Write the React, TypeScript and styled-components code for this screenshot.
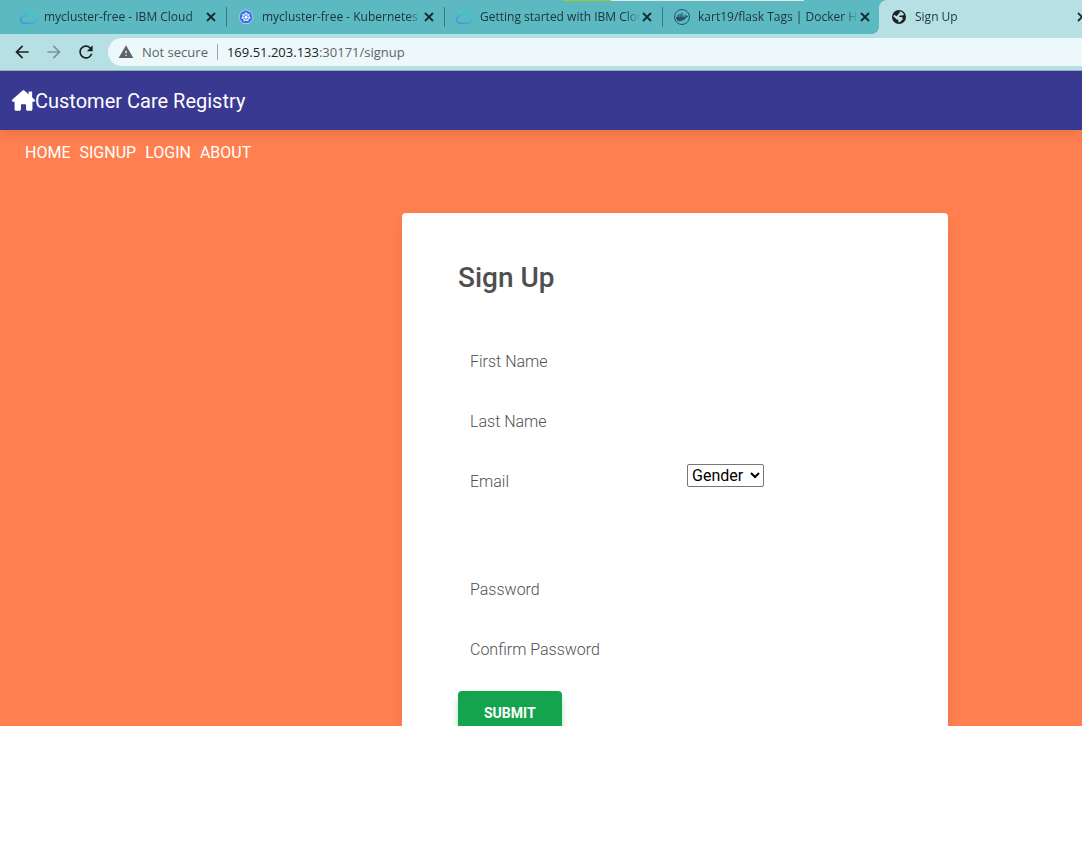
import React, { useState } from "react";
import styled, { createGlobalStyle, css } from "styled-components";
import { MdArrowBack, MdArrowForward, MdRefresh, MdWarning } from "react-icons/md";
import { FaDocker } from "react-icons/fa6";

const GlobalStyle = createGlobalStyle`
  *, *::before, *::after { box-sizing: border-box; }
  body {
    margin: 0;
    background: #fff;
    font-family: Roboto, "Liberation Sans", sans-serif;
    font-size: 16px;
    line-height: 24px;
  }
  button, input, select { font: inherit; }
`;

const chromeFont = `"Open Sans", "Noto Sans", sans-serif`;

const Frame = styled.div`
  display: flex;
  flex-direction: column;
  height: calc(100vh - 142px);
  min-height: 320px;
  overflow: hidden;
`;

/* Browser chrome */

const TabStrip = styled.div`
  position: relative;
  display: flex;
  flex: none;
  height: 34px;
  padding-left: 8px;
  overflow: hidden;
  background: #5cb8c1;
  font-family: ${chromeFont};
  font-size: 12px;
  line-height: 16px;
  color: #1d3336;
`;

const LoadBar = styled.div`
  position: absolute;
  top: 0;
  left: 52%;
  display: flex;
  width: 241px;
  height: 1px;
  background: #dfe6df;

  &::before {
    content: "";
    width: 20%;
    background: #a2c62b;
  }
`;

const Tab = styled.div<{ $active?: boolean; $divider?: boolean }>`
  position: relative;
  display: flex;
  flex: none;
  align-items: center;
  width: 218px;
  padding: 0 8px 0 12px;

  ${(p) =>
    p.$divider &&
    css`
      &::after {
        content: "";
        position: absolute;
        right: -1px;
        top: 7px;
        width: 1px;
        height: 20px;
        background: #3b777d;
      }
    `}

  ${(p) =>
    p.$active &&
    css`
      margin-left: -1px;
      background: #b7e0e4;
      border-radius: 8px 8px 0 0;

      &::before {
        content: "";
        position: absolute;
        left: -8px;
        bottom: 0;
        width: 8px;
        height: 8px;
        background: radial-gradient(circle at 0 0, transparent 8px, #b7e0e4 8px);
      }
    `}
`;

const TabIcon = styled.span`
  display: flex;
  flex: none;
  width: 16px;
  height: 16px;
  color: #202124;
`;

const TabTitle = styled.span`
  flex: 1;
  min-width: 0;
  margin-left: 8px;
  overflow: hidden;
  white-space: nowrap;
  mask-image: linear-gradient(to left, transparent 0, #000 14px);
`;

const CloseButton = styled.button`
  display: flex;
  flex: none;
  padding: 1px;
  border: 0;
  background: none;
  color: #182b2d;
`;

const Toolbar = styled.div`
  display: flex;
  flex: none;
  align-items: center;
  gap: 12px;
  height: 37px;
  padding-left: 12px;
  background: #b7e0e4;
  border-bottom: 1px solid #8fb0b6;
`;

const ToolButton = styled.button`
  display: flex;
  padding: 0;
  border: 0;
  background: none;
  color: #202124;

  &:disabled {
    color: #7b9699;
  }
`;

const AddressBar = styled.div`
  display: flex;
  flex: 1;
  align-items: center;
  height: 28px;
  padding-left: 10px;
  border-radius: 14px 0 0 14px;
  background: #ecf8f9;
  font-family: ${chromeFont};
  font-size: 13px;
  line-height: 20px;
  color: #5f6368;
  white-space: nowrap;
`;

const Security = styled.span`
  display: flex;
  align-items: center;
  gap: 8px;
  padding-right: 9px;
`;

const Divider = styled.span`
  width: 1px;
  height: 16px;
  margin-right: 9px;
  background: #9aa5a7;
`;

const Host = styled.span`
  color: #202124;
`;

/* Page */

const Page = styled.div`
  flex: 1;
  min-height: 0;
  overflow: hidden;
  background: #ff7f50;
`;

const Header = styled.header`
  position: relative;
  display: flex;
  align-items: center;
  height: 59px;
  padding: 0 12px;
  background: #393991;
  box-shadow: 0 4px 12px rgba(0, 0, 0, 0.1);
  color: #fff;
  font-size: 20px;
`;

const Brand = styled.a`
  display: flex;
  align-items: center;
  color: inherit;
  text-decoration: none;
`;

const Nav = styled.nav`
  display: flex;
  gap: 9px;
  padding: 11px 25px 0;
`;

const NavLink = styled.a`
  color: #fff;
  text-decoration: none;
`;

const Main = styled.main`
  display: grid;
  grid-template-columns: 3fr minmax(0, 546px) 1fr;
  padding-top: 48px;
`;

const Card = styled.form`
  grid-column: 2;
  padding: 48px 56px;
  border-radius: 4px;
  background: #fff;
  box-shadow: 0 2px 15px -3px rgba(0, 0, 0, 0.07), 0 10px 20px -2px rgba(0, 0, 0, 0.04);
`;

const Title = styled.h1`
  margin: 0 0 48px;
  font-size: 28px;
  font-weight: 500;
  line-height: 34px;
  color: #4f4f4f;
`;

const Row = styled.div<{ $gap?: number }>`
  display: grid;
  grid-template-columns: 1fr 1fr;
  column-gap: 24px;
  align-items: start;
  margin-bottom: ${(p) => p.$gap ?? 24}px;
`;

const FieldBox = styled.div`
  display: grid;
  height: 36px;
  align-items: center;

  > * {
    grid-area: 1 / 1;
  }
`;

const Label = styled.label<{ $hidden: boolean }>`
  padding: 2px 0 0 12px;
  font-weight: 300;
  color: #4f4f4f;
  pointer-events: none;
  visibility: ${(p) => (p.$hidden ? "hidden" : "visible")};
`;

const Input = styled.input`
  width: 100%;
  height: 36px;
  padding: 0 12px;
  border: 0;
  background: transparent;
  color: #4f4f4f;
  outline: none;
`;

const Select = styled.select`
  justify-self: start;
  width: 77px;
  height: 23px;
  margin-top: 1px;
  padding: 0;
  border: 1px solid #767676;
  border-radius: 2px;
  background: #fff;
  color: #000;
`;

const Submit = styled.button`
  padding: 10px 26px;
  border: 0;
  border-radius: 4px;
  background: #14a44d;
  box-shadow: 0 4px 9px -4px #14a44d;
  color: #fff;
  font-size: 14px;
  font-weight: 700;
  line-height: 24px;
`;

const CloseIcon = () => (
  <svg width="12" height="12" viewBox="0 0 12 12" fill="none">
    <path d="M2 2l8 8M10 2l-8 8" stroke="currentColor" strokeWidth="1.8" />
  </svg>
);

const HouseIcon = () => (
  <svg width="23" height="21" viewBox="0 0 576 512" fill="currentColor">
    <path d="M416 32h72a16 16 0 0 1 16 16v150l-88-80z" />
    <path d="M576 256c0 18-15 32-32 32h-32v184c0 22-18 40-40 40h-80c-22 0-40-18-40-40v-104c0-9-7-16-16-16h-96c-9 0-16 7-16 16v104c0 22-18 40-40 40h-80c-22 0-40-18-40-40V288H32c-18 0-32-14-32-32 0-9 3-17 10-24L266 8c7-6 15-8 22-8s15 2 21 7l256 225c8 7 11 15 11 24z" />
  </svg>
);

const GlobeIcon = () => (
  <svg width="16" height="16" viewBox="0 0 16 16">
    <circle cx="8" cy="8" r="7" fill="#202124" />
    <path
      d="M8.600 2.600c2 .1 3.500 1.200 4.400 2.800-.6.900-1.500 1.200-2.700 1H8.800c-.8.500-.8 1.200-.1 1.600l1.800.1c1 .4 1.300 1.200 1.100 2.200-.2 1-1.200 1.300-1.900 2-.4.700-1 1.200-2 1.100l-.4-2c-.2-.8-.9-1-1.800-1L4.300 9.100 2.500 7.700c0-.8.2-1.400.5-2l2.600 1.500 1.100-1.300c.2-.9 1.300-.8 1.700-1.400z"
      fill="#b7e0e4"
    />
  </svg>
);

const CloudIcon = () => (
  <svg width="16" height="16" viewBox="0 0 16 16" fill="none">
    <defs>
      <linearGradient id="cloudFill" x1="0" y1="1" x2="1" y2="0">
        <stop offset="0" stopColor="#2f8fe6" />
        <stop offset="1" stopColor="#3fd0d8" />
      </linearGradient>
    </defs>
    <path
      d="M3.800 14.200h8.800a3 3 0 0 0 .5-5.900 4.600 4.600 0 0 0-8.700-1.400A3.700 3.700 0 0 0 .7 10.700a3.300 3.300 0 0 0 3.100 3.500z"
      stroke="url(#cloudFill)"
      strokeWidth="1.3"
    />
    <path
      d="M4.500 4.600 3.800 3.300M7 3.200 6.700 1.800M9.800 3.100 10.200 1.700M12.300 4.400l1-1.100M13.800 6.600l1.300-.5"
      stroke="#3fcbd6"
      strokeWidth="1.200"
    />
  </svg>
);

const KubernetesIcon = () => (
  <svg width="16" height="16" viewBox="0 0 16 16">
    <path
      d="M8 .8 13.600 3.500 15 9.500 11.100 14.500H4.900L1 9.500 2.400 3.500z"
      fill="#326ce5"
      stroke="#c3daf5"
      strokeWidth=".8"
      strokeLinejoin="round"
    />
    <circle cx="8" cy="8" r="3.400" fill="none" stroke="#fff" strokeWidth="1" />
    <path
      d="M8 8V3M8 8 11.900 4.900M8 8l4.900 1.100M8 8l2.200 4.500M8 8l-2.200 4.500M8 8 3.100 9.100M8 8 4.100 4.900"
      stroke="#fff"
      strokeWidth=".8"
    />
    <circle cx="8" cy="8" r="1.100" fill="#fff" />
  </svg>
);

const DockerRing = styled.span`
  display: flex;
  align-items: center;
  justify-content: center;
  width: 16px;
  height: 16px;
  border: 1px solid #27556b;
  border-radius: 50%;
  color: #27556b;
`;

const tabs = [
  { title: "mycluster-free - IBM Cloud", icon: <CloudIcon /> },
  { title: "mycluster-free - Kubernetes D", icon: <KubernetesIcon /> },
  { title: "Getting started with IBM Clou", icon: <CloudIcon /> },
  {
    title: "kart19/flask Tags | Docker Hu",
    icon: (
      <DockerRing>
        <FaDocker size={12} />
      </DockerRing>
    ),
  },
  { title: "Sign Up", icon: <GlobeIcon />, active: true },
];

const links = ["HOME", "SIGNUP", "LOGIN", "ABOUT"];

type FieldProps = { id: string; label: string; type?: string };

function Field({ id, label, type = "text" }: FieldProps) {
  const [value, setValue] = useState("");
  return (
    <FieldBox>
      <Input id={id} type={type} value={value} onChange={(e) => setValue(e.target.value)} />
      <Label htmlFor={id} $hidden={value !== ""}>
        {label}
      </Label>
    </FieldBox>
  );
}

export default function App() {
  return (
    <>
      <GlobalStyle />
      <Frame>
        <TabStrip>
          {tabs.map((tab, i) => (
            <Tab key={tab.title} $active={tab.active} $divider={i < 3}>
              <TabIcon>{tab.icon}</TabIcon>
              <TabTitle>{tab.title}</TabTitle>
              <CloseButton type="button" aria-label="Close tab">
                <CloseIcon />
              </CloseButton>
            </Tab>
          ))}
          <LoadBar />
        </TabStrip>
        <Toolbar>
          <ToolButton type="button" aria-label="Back">
            <MdArrowBack size={20} />
          </ToolButton>
          <ToolButton type="button" aria-label="Forward" disabled>
            <MdArrowForward size={20} />
          </ToolButton>
          <ToolButton type="button" aria-label="Reload">
            <MdRefresh size={20} />
          </ToolButton>
          <AddressBar>
            <Security>
              <MdWarning size={16} />
              Not secure
            </Security>
            <Divider />
            <Host>169.51.203.133</Host>:30171/signup
          </AddressBar>
        </Toolbar>
        <Page>
          <Header>
            <Brand href="#home">
              <HouseIcon />
              Customer Care Registry
            </Brand>
          </Header>
          <Nav>
            {links.map((link) => (
              <NavLink key={link} href={`#${link.toLowerCase()}`}>
                {link}
              </NavLink>
            ))}
          </Nav>
          <Main>
            <Card onSubmit={(e) => e.preventDefault()}>
              <Title>Sign Up</Title>
              <Row>
                <Field id="first-name" label="First Name" />
              </Row>
              <Row>
                <Field id="last-name" label="Last Name" />
              </Row>
              <Row $gap={72}>
                <Field id="email" label="Email" type="email" />
                <Select aria-label="Gender" defaultValue="">
                  <option value="">Gender</option>
                </Select>
              </Row>
              <Row>
                <Field id="password" label="Password" type="password" />
              </Row>
              <Row>
                <Field id="confirm-password" label="Confirm Password" type="password" />
              </Row>
              <Submit type="submit">SUBMIT</Submit>
            </Card>
          </Main>
        </Page>
      </Frame>
    </>
  );
}
